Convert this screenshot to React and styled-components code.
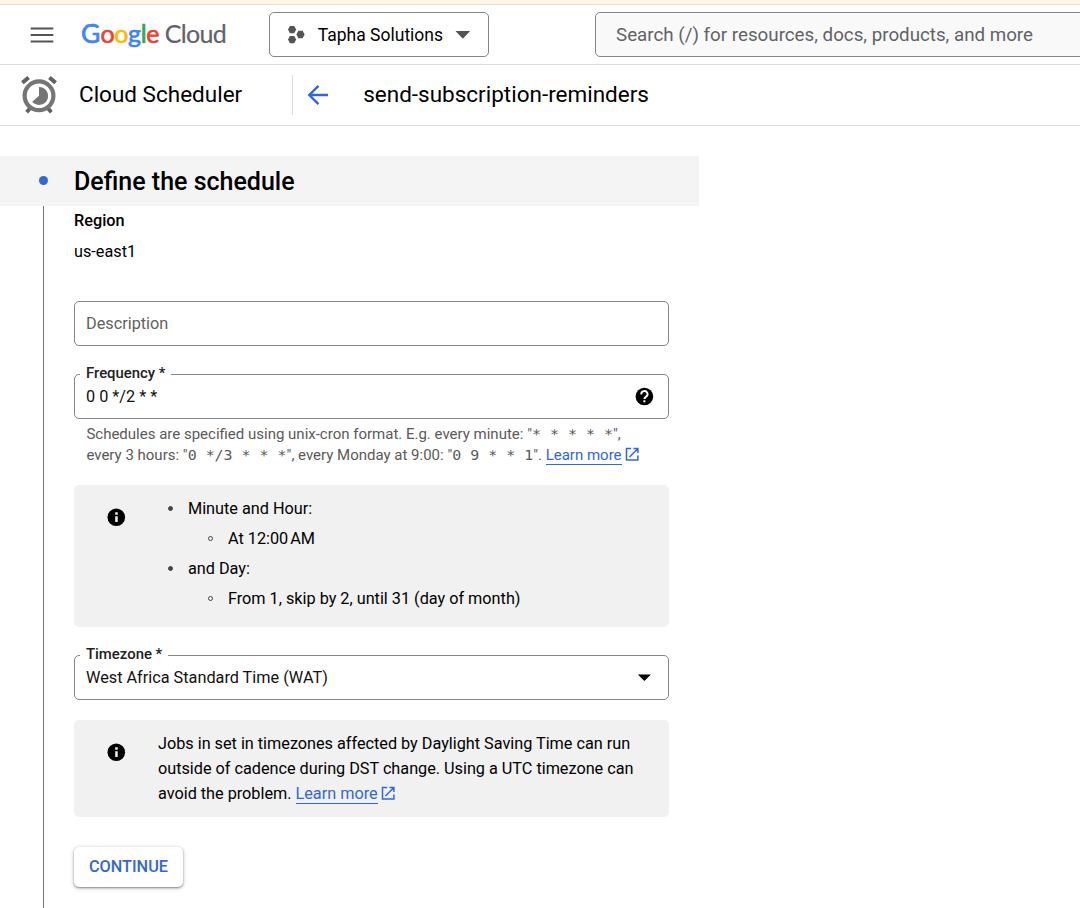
import React from "react";
import styled, { createGlobalStyle } from "styled-components";

const Global = createGlobalStyle`
  *, *::before, *::after { box-sizing: border-box; }
  html, body { margin: 0; padding: 0; }
  body {
    background: #fff;
    color: #000;
    font-family: Roboto, "Liberation Sans", sans-serif;
    font-size: 16.25px;
    overflow: hidden;
  }
`;

const Page = styled.div`
  height: 908px;
  display: flex;
  flex-direction: column;
  overflow: hidden;
`;

const Notice = styled.div`
  flex: none;
  height: 5px;
  background: #fef7e6;
  border-bottom: 1px solid #e9e0cc;
`;

const TopBar = styled.header`
  flex: none;
  height: 60px;
  display: flex;
  align-items: center;
  padding-left: 30px;
  border-bottom: 1px solid #dadce0;
`;

const MenuSvg = styled.svg`
  flex: none;
`;

const Logo = styled.div`
  width: 148px;
  margin-left: 27px;
  margin-right: 40px;
  padding-bottom: 3px;
  flex: none;
  font-family: Lato, "Liberation Sans", sans-serif;
  font-size: 25px;
  line-height: 30px;
  white-space: nowrap;
`;

const LogoLetter = styled.span`
  color: ${(p) => p.$color};
  font-weight: 400;
  font-size: ${(p) => p.$size || "25px"};
  letter-spacing: ${(p) => p.$spacing || "-0.4px"};
  -webkit-text-stroke: ${(p) => p.$stroke || "0.7px"} ${(p) => p.$color};
`;

const ProjectPicker = styled.button`
  flex: none;
  width: 220px;
  height: 45px;
  display: flex;
  align-items: center;
  padding: 0 17px;
  background: #fff;
  border: 1px solid #80868b;
  border-radius: 5px;
  font: 400 17.5px Roboto, sans-serif;
  color: #000;
`;

const PickerText = styled.span`
  margin-left: 12.2px;
  margin-right: 12.3px;
  white-space: nowrap;
`;

const Search = styled.div`
  flex: none;
  width: 520px;
  height: 45px;
  margin-left: 106px;
  padding-left: 20px;
  background: #f9f9f9;
  border: 1px solid #80868b;
  border-radius: 5px;
  color: #5f6368;
  font-size: 18.75px;
  line-height: 44px;
  white-space: nowrap;
`;

const ProductBar = styled.div`
  flex: none;
  height: 61px;
  display: flex;
  align-items: center;
  padding-left: 20px;
  border-bottom: 1px solid #dadce0;
`;

const Product = styled.div`
  width: 273px;
  height: 40px;
  display: flex;
  align-items: center;
  border-right: 1px solid #dadce0;
`;

const BarTitle = styled.span`
  font-size: 22.5px;
  line-height: 28px;
  margin-left: ${(p) => p.$gap};
  padding-bottom: 3px;
  white-space: nowrap;
`;

const BackIcon = styled.svg`
  margin-left: 10px;
  flex: none;
`;

const StepHeader = styled.div`
  flex: none;
  width: 699px;
  height: 50px;
  margin-top: 30px;
  display: flex;
  align-items: center;
  background: #f4f4f4;
`;

const StepDot = styled.span`
  width: 9px;
  height: 9px;
  margin: 0 26.5px 2px 38.5px;
  border-radius: 50%;
  background: #3367d6;
`;

const StepTitle = styled.h2`
  margin: 0;
  padding-top: 2px;
  font-size: 25px;
  font-weight: 500;
  line-height: 30px;
`;

const StepBody = styled.section`
  flex: 1;
  width: 626px;
  margin-left: 43px;
  padding-left: 30px;
  border-left: 1px solid #757779;
`;

const FieldName = styled.div`
  padding-top: 4px;
  font-weight: 500;
  line-height: 21px;
`;

const FieldValue = styled.div`
  margin-top: 10px;
  line-height: 21px;
`;

const Field = styled.div`
  position: relative;
  height: 45px;
  margin-top: ${(p) => p.$top};
  padding: 0 11px;
  display: flex;
  align-items: center;
  justify-content: space-between;
  border: 1px solid #80868b;
  border-radius: 5px;
`;

const FieldLabel = styled.label`
  position: absolute;
  left: 5px;
  top: -11px;
  padding: 0 6px;
  background: #fff;
  color: #202124;
  font-size: 14.9px;
  font-weight: 500;
  line-height: 18px;
  white-space: nowrap;
`;

const FieldText = styled.span`
  color: ${(p) => (p.$muted ? "#616161" : "#111")};
`;

const Hint = styled.p`
  margin: 5px 0 0 12.4px;
  color: #5a5a5a;
  font-size: 15px;
  line-height: 21px;
  white-space: nowrap;
`;

const HintLine = styled.span`
  display: block;
  height: 21px;
`;

const Code = styled.code`
  font-family: "DejaVu Sans Mono", monospace;
  font-size: 14.95px;
  line-height: 1;
`;

const Link = styled.a`
  color: #3367d6;
  text-decoration: none;
  border-bottom: 1px solid #3367d6;
`;

const LinkIcon = styled.svg`
  margin-left: 3px;
  vertical-align: -2px;
`;

const Panel = styled.div`
  height: ${(p) => p.$height};
  margin-top: ${(p) => p.$top};
  padding: ${(p) => p.$pad};
  display: flex;
  align-items: flex-start;
  background: #f1f1f1;
  border-radius: 5px;
`;

const PanelIcon = styled.svg`
  flex: none;
  margin-top: ${(p) => p.$top};
`;

const CronList = styled.ul`
  margin: 0 0 0 32px;
  padding: 0;
  list-style: none;
  letter-spacing: -0.01px;
`;

const CronItem = styled.li`
  height: 30px;
  display: flex;
  align-items: center;
  padding-left: ${(p) => (p.$nested ? "50px" : "10px")};
`;

const Bullet = styled.span`
  width: 5px;
  height: 5px;
  margin-right: 15px;
  border-radius: 50%;
  border: 1px solid #444;
  background: ${(p) => (p.$hollow ? "transparent" : "#444")};
`;

const PanelText = styled.p`
  margin: 0 0 0 32px;
  line-height: 25px;
  letter-spacing: -0.015px;
  white-space: nowrap;
`;

const ContinueButton = styled.button`
  display: block;
  width: 109px;
  height: 40px;
  margin-top: 30px;
  padding: 0 0 2px;
  border: 0;
  border-radius: 5px;
  background: #fff;
  box-shadow: 0 1px 2px rgba(0, 0, 0, 0.38), 0 1px 5px rgba(0, 0, 0, 0.2);
  color: #3367d6;
  font: 500 16.25px Roboto, sans-serif;
`;

const MenuIcon = () => (
  <MenuSvg width="24" height="19" viewBox="0 0 24 19">
    <path d="M.7 3.5h22.6M.7 10h22.6M.7 16.5h22.6" stroke="#555" strokeWidth="2.2" />
  </MenuSvg>
);

const ProjectIcon = () => (
  <svg width="19" height="20" viewBox="0 0 19 20" fill="#555">
    <path d="M3 .7h4.4l2 3.8-2 3.8H3L1 4.5zM3 10.9h4.4l2 3.8-2 3.8H3l-2-3.8zM11.6 5.7H16l2 3.8-2 3.8h-4.4l-2-3.8z" />
  </svg>
);

const SchedulerIcon = () => (
  <svg width="38" height="40" viewBox="0 0 38 40" fill="none">
    <path d="M2.4 7.8 8.6 2.5M29.4 2.5l6.2 5.3" stroke="#616161" strokeWidth="4" />
    <path d="M9.8 33.5 6.7 37.2M28.2 33.5l3.1 3.7" stroke="#616161" strokeWidth="3.8" />
    <circle cx="19" cy="20.8" r="14.4" stroke="#757575" strokeWidth="4.2" />
    <path d="M19 11.9v8.9l-6.8 5.9A9 9 0 1 0 19 11.9z" fill="#757575" />
  </svg>
);

const Arrow = () => (
  <BackIcon width="30" height="30" viewBox="0 0 30 30">
    <path d="M25 15H7M15.5 5.8 6.3 15l9.2 9.2" fill="none" stroke="#3367d6" strokeWidth="2.4" />
  </BackIcon>
);

const InfoIcon = ({ top }) => (
  <PanelIcon $top={top} width="20" height="20" viewBox="0 0 20 20">
    <circle cx="10.3" cy="10.3" r="8.8" fill="#000" />
    <path d="M9.2 9.3h2.5V15H9.2zM9.2 5.3h2.5v2.4H9.2z" fill="#f1f1f1" />
  </PanelIcon>
);

const HelpIcon = () => (
  <svg width="26" height="20" viewBox="0 0 26 20">
    <circle cx="13.4" cy="9.5" r="8.8" fill="#000" />
    <path d="M10.3 7.4a3.1 3.1 0 1 1 4.8 2.3c-1.1.8-1.7 1.1-1.7 2.4" fill="none" stroke="#fff" strokeWidth="2" />
    <path d="M12.4 13.3h2v2h-2z" fill="#fff" />
  </svg>
);

const OpenIcon = () => (
  <LinkIcon width="15" height="15" viewBox="0 0 15 15" fill="none" stroke="#3367d6" strokeWidth="1.5">
    <path d="M6.2 1.6H1.5v11.4h11.4V8.5M8.5 1.6h4.4v4.4M12.7 1.8 4.5 10" />
  </LinkIcon>
);

export default function App() {
  return (
    <Page>
      <Global />
      <Notice />
      <TopBar>
        <MenuIcon />
        <Logo>
          <LogoLetter $color="#4285f4" $size="26.5px" $spacing="0.2px">G</LogoLetter>
          <LogoLetter $color="#ea4335">o</LogoLetter>
          <LogoLetter $color="#fbbc04">o</LogoLetter>
          <LogoLetter $color="#4285f4">g</LogoLetter>
          <LogoLetter $color="#34a853">l</LogoLetter>
          <LogoLetter $color="#ea4335">e</LogoLetter>
          <LogoLetter $color="#5f6368" $stroke="0.2px" $spacing="-0.65px">
            {" Cloud"}
          </LogoLetter>
        </Logo>
        <ProjectPicker>
          <ProjectIcon />
          <PickerText>Tapha Solutions</PickerText>
          <svg width="16" height="8" viewBox="0 0 16 8">
            <path d="M.5 0h15L8 7.8z" fill="#555" />
          </svg>
        </ProjectPicker>
        <Search>Search (/) for resources, docs, products, and more</Search>
      </TopBar>
      <ProductBar>
        <Product>
          <SchedulerIcon />
          <BarTitle $gap="21px">Cloud Scheduler</BarTitle>
        </Product>
        <Arrow />
        <BarTitle $gap="30.2px">send-subscription-reminders</BarTitle>
      </ProductBar>

      <StepHeader>
        <StepDot />
        <StepTitle>Define the schedule</StepTitle>
      </StepHeader>
      <StepBody>
        <FieldName>Region</FieldName>
        <FieldValue>us-east1</FieldValue>

        <Field $top="39px">
          <FieldText $muted>Description</FieldText>
        </Field>

        <Field $top="28px">
          <FieldLabel>Frequency *</FieldLabel>
          <FieldText>0 0 */2 * *</FieldText>
          <HelpIcon />
        </Field>
        <Hint>
          <HintLine>
            Schedules are specified using unix-cron format. E.g. every minute: "<Code>* * * * *</Code>",
          </HintLine>
          <HintLine>
            every 3 hours: "<Code>0 */3 * * *</Code>", every Monday at 9:00: "<Code>0 9 * * 1</Code>".{" "}
            <Link>Learn more</Link>
            <OpenIcon />
          </HintLine>
        </Hint>

        <Panel $height="142px" $top="19px" $pad="8px 32px">
          <InfoIcon top="14px" />
          <CronList>
            <CronItem><Bullet />Minute and Hour:</CronItem>
            <CronItem $nested><Bullet $hollow />At 12:00{"\u202f"}AM</CronItem>
            <CronItem><Bullet />and Day:</CronItem>
            <CronItem $nested><Bullet $hollow />From 1, skip by 2, until 31 (day of month)</CronItem>
          </CronList>
        </Panel>

        <Field $top="28px">
          <FieldLabel>Timezone *</FieldLabel>
          <FieldText>West Africa Standard Time (WAT)</FieldText>
          <svg width="26" height="8" viewBox="0 0 26 8">
            <path d="M6.9.5h13l-6.5 6.5z" fill="#000" />
          </svg>
        </Field>

        <Panel $height="97px" $top="20px" $pad="11px 32px">
          <InfoIcon top="11px" />
          <PanelText>
            Jobs in set in timezones affected by Daylight Saving Time can run
            <br />
            outside of cadence during DST change. Using a UTC timezone can
            <br />
            avoid the problem. <Link>Learn more</Link>
            <OpenIcon />
          </PanelText>
        </Panel>

        <ContinueButton>CONTINUE</ContinueButton>
      </StepBody>
    </Page>
  );
}
